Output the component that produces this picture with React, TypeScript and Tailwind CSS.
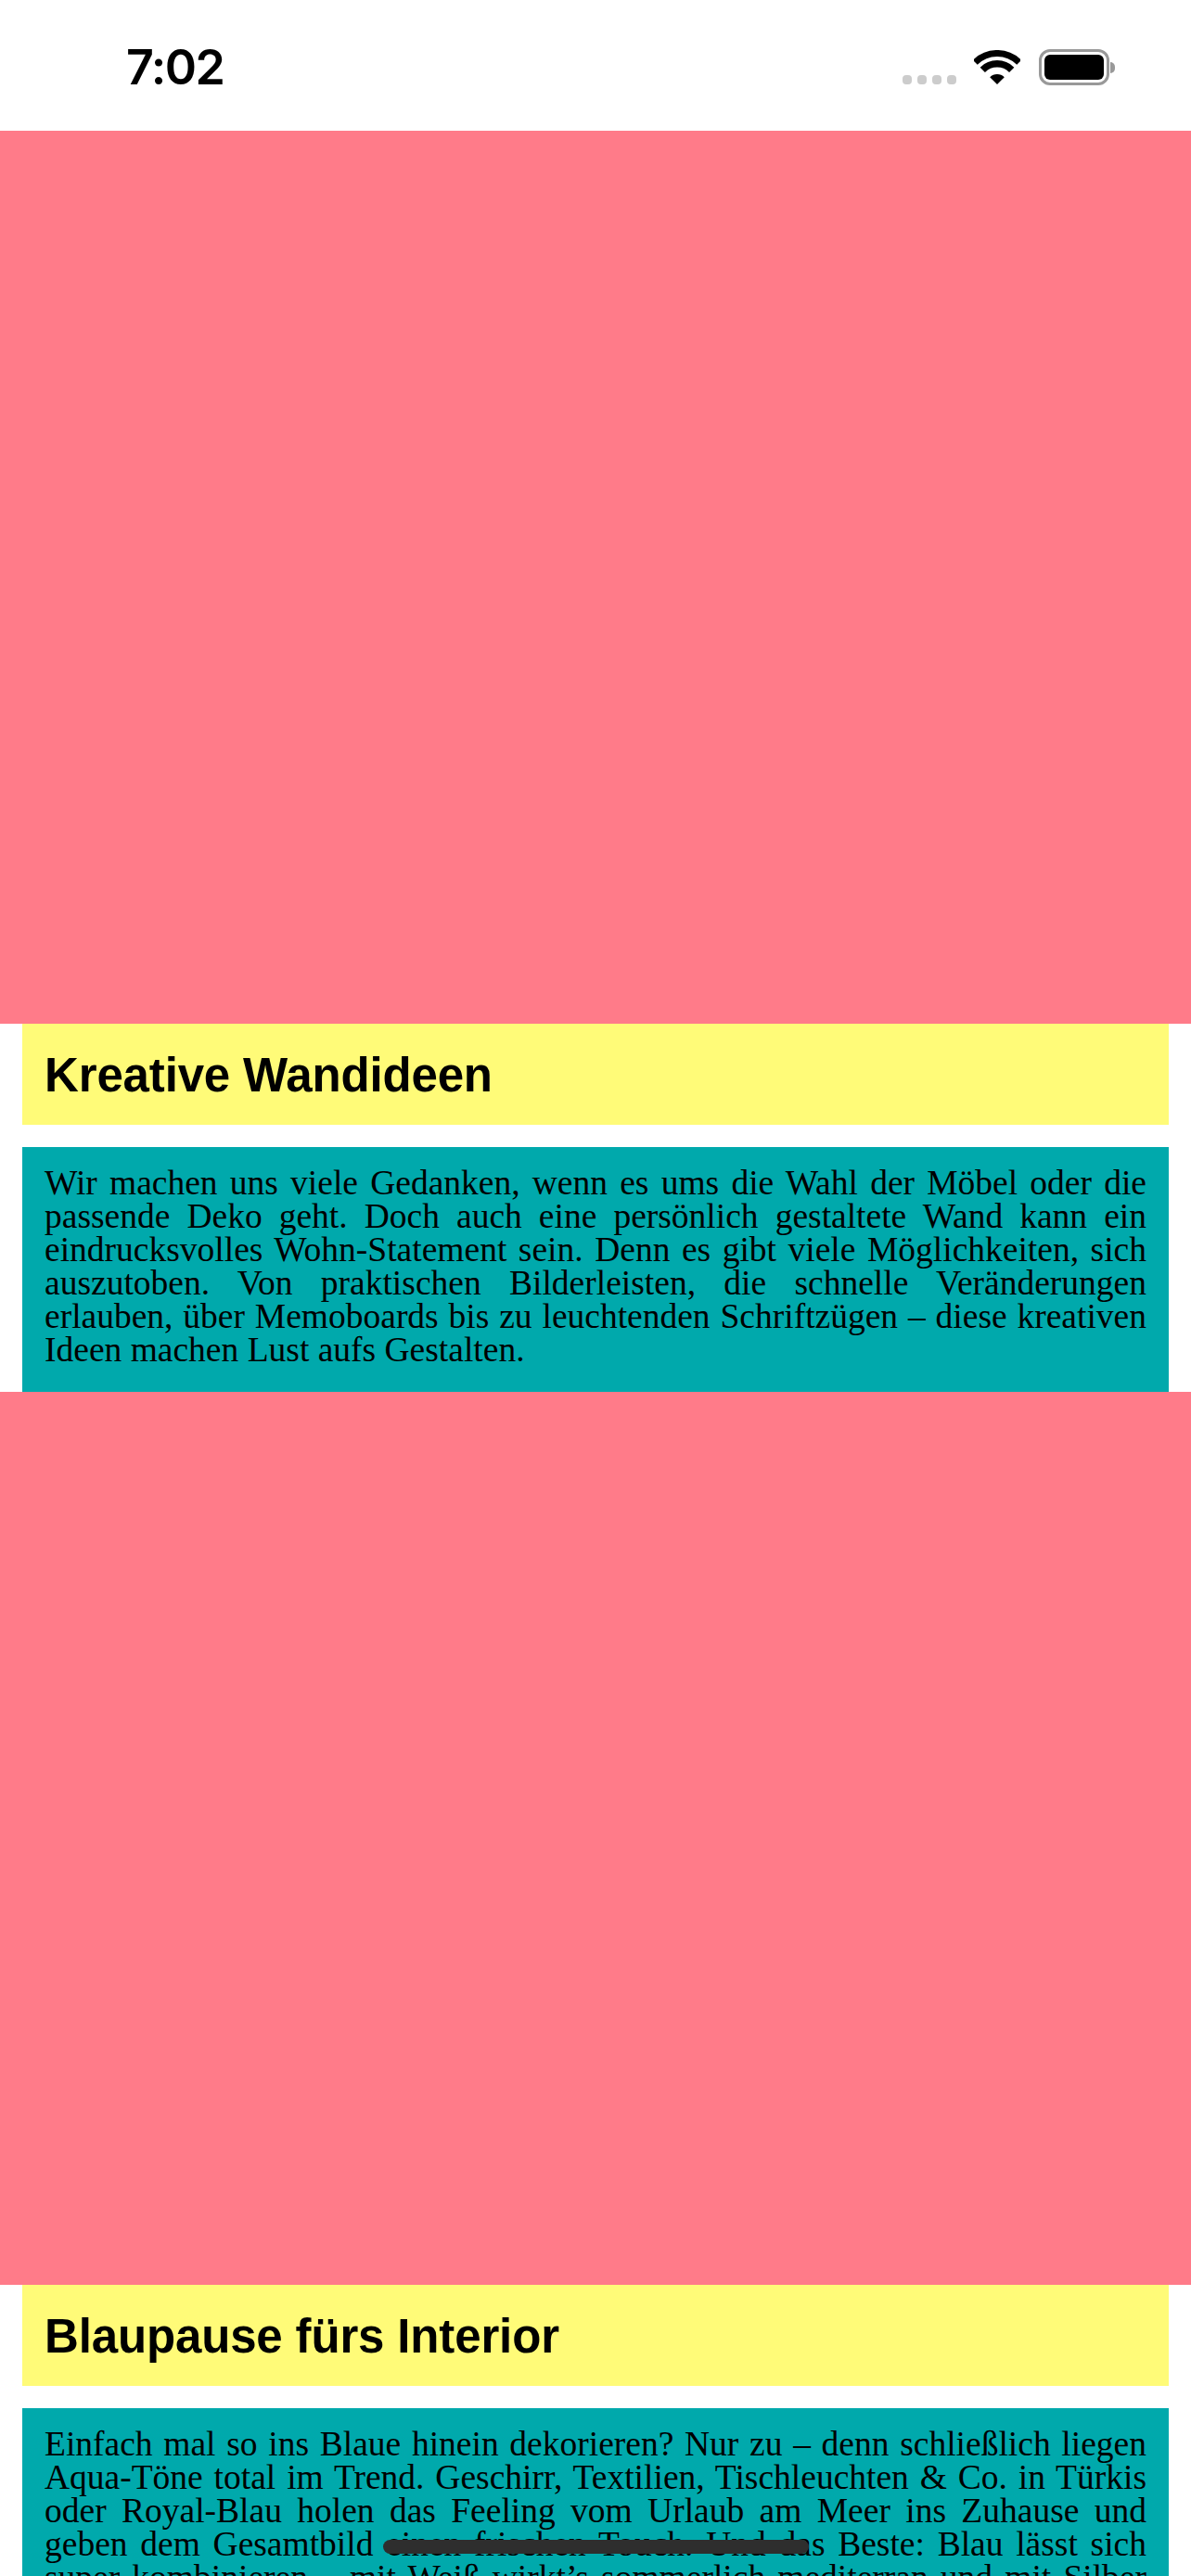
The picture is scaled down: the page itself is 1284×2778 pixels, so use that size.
import React from 'react';

const serif = "font-['Liberation_Serif',serif]";

const articles = [
  {
    title: 'Kreative Wandideen',
    lines: [
      'Wir machen uns viele Gedanken, wenn es ums die Wahl der Möbel oder die',
      'passende Deko geht. Doch auch eine persönlich gestaltete Wand kann ein',
      'eindrucksvolles Wohn-Statement sein. Denn es gibt viele Möglichkeiten, sich',
      'auszutoben. Von praktischen Bilderleisten, die schnelle Veränderungen',
      'erlauben, über Memoboards bis zu leuchtenden Schriftzügen – diese kreativen',
    ],
    last: 'Ideen machen Lust aufs Gestalten.',
  },
  {
    title: 'Blaupause fürs Interior',
    lines: [
      'Einfach mal so ins Blaue hinein dekorieren? Nur zu – denn schließlich liegen',
      'Aqua-Töne total im Trend. Geschirr, Textilien, Tischleuchten & Co. in Türkis',
      'oder Royal-Blau holen das Feeling vom Urlaub am Meer ins Zuhause und',
      'geben dem Gesamtbild einen frischen Touch. Und das Beste: Blau lässt sich',
      'super kombinieren – mit Weiß wirkt’s sommerlich mediterran und mit Silber',
    ],
    last: '',
  },
];

const StatusBar = () => (
  <div className="h-[141px] bg-white flex items-start justify-between pl-[136px] pr-[82px] pt-[53px]">
    <span className="font-['Inter',sans-serif] font-semibold text-[52px] leading-[39px] tracking-[-1.5px] text-black">7:02</span>
    <div className="flex items-end">
      <div className="flex gap-[6px] mb-[1px] mr-[19px]">
        <span className="w-[10px] h-[10px] rounded-[4px] bg-[#cccccc]" />
        <span className="w-[10px] h-[10px] rounded-[4px] bg-[#cccccc]" />
        <span className="w-[10px] h-[10px] rounded-[4px] bg-[#cccccc]" />
        <span className="w-[10px] h-[10px] rounded-[4px] bg-[#cccccc]" />
      </div>
      <svg width="50" height="37" viewBox="0 0 50 37" className="mb-[1px] mr-[20px]">
        <path d="M1.3 13.3A33.5 33.5 0 0 1 48.7 13.3" fill="none" stroke="#000" strokeWidth="7" />
        <path d="M9.3 21.3A22.25 22.25 0 0 1 40.7 21.3" fill="none" stroke="#000" strokeWidth="7.5" />
        <path d="M25 37L17.2 29.2A11 11 0 0 1 32.8 29.2Z" fill="#000" />
      </svg>
      <div className="flex items-center">
        <div className="w-[76px] h-[39px] rounded-[12px] border-[3px] border-[#999999] p-[3px]">
          <div className="w-full h-full rounded-[6px] bg-black" />
        </div>
        <div className="w-[5px] h-[12px] ml-[1px] rounded-r-full bg-[#999999]" />
      </div>
    </div>
  </div>
);

export default function App() {
  return (
    <div className="relative w-[1284px] h-[2778px] overflow-hidden bg-white">
      <StatusBar />
      {articles.map((a) => (
        <section key={a.title}>
          <div className="h-[963px] bg-[#ff7b89]" />
          <div className="mx-6 h-[109px] bg-[#fffb78] flex items-center px-6 pt-[3px]">
            <h2 className="font-['Liberation_Sans',sans-serif] font-bold text-[51px] tracking-[-0.15px] text-black">{a.title}</h2>
          </div>
          <div className={`mt-6 mx-6 h-[264px] bg-[#00a9ac] px-6 pt-[21px] ${serif} text-[37.5px] leading-[36px] text-black`}>
            {a.lines.map((line) => (
              <p key={line} className="text-justify [text-align-last:justify] whitespace-nowrap">{line}</p>
            ))}
            {a.last && <p>{a.last}</p>}
          </div>
        </section>
      ))}
      <div className="absolute left-[413px] top-[2739px] w-[459px] h-[15px] rounded-full bg-[#2e2e2e]" />
    </div>
  );
}
